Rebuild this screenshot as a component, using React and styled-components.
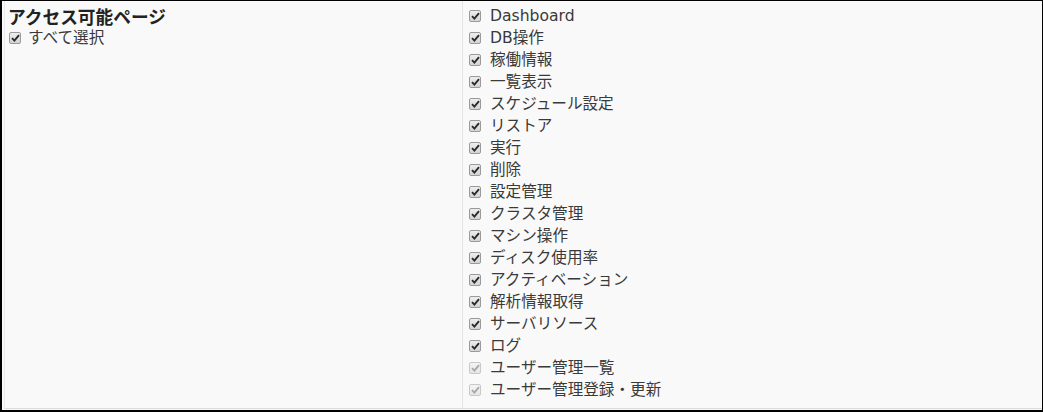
import React from 'react';
import styled, { createGlobalStyle } from 'styled-components';

const GlobalStyle = createGlobalStyle`
  html, body {
    margin: 0;
    padding: 0;
    background: #fff;
  }
  body {
    font-family: "DejaVu Sans", "Noto Sans CJK JP", sans-serif;
    color: #333;
  }
`;

const Frame = styled.div`
  box-sizing: border-box;
  width: 1043px;
  height: 412px;
  border: 1px solid #000;
  border-left-width: 2px;
  border-bottom-width: 2px;
  background: #f9f9f9;
  padding-left: 2px;
  overflow: hidden;
`;

const Table = styled.div`
  display: grid;
  grid-template-columns: 457px 1fr;
  height: 407px;
  border-left: 1px solid #e9e9e9;
  border-bottom: 1px solid #dcdcdc;
`;

const Cell = styled.div`
  padding: ${(p) => (p.$right ? '4px 0 0 5px' : '4px 0 0 3px')};
  border-left: ${(p) => (p.$right ? '1px solid #e4e4e4' : 'none')};
`;

const Heading = styled.div`
  font-family: "Noto Sans CJK JP", sans-serif;
  font-size: 17.7px;
  font-weight: bold;
  line-height: 22px;
  color: #222;
`;

const Row = styled.label`
  display: flex;
  align-items: center;
  gap: ${(p) => (p.$wide ? '9px' : '7px')};
  height: 22px;
  font-size: 15.6px;
  color: #3a3a3a;
  white-space: nowrap;
`;

const Box = styled.span`
  box-sizing: border-box;
  flex: none;
  width: 12px;
  height: 12px;
  margin-left: 1px;
  border: 1px solid ${(p) => (p.$disabled ? '#c8c8c8' : '#9a9a9a')};
  border-radius: 2px;
  background: ${(p) =>
    p.$disabled
      ? 'linear-gradient(#f4f4f4, #e6e6e6)'
      : 'linear-gradient(#eeeeee, #d4d4d4)'};
  display: flex;
  align-items: center;
  justify-content: center;

  svg {
    display: block;
  }
`;

const Label = styled.span`
  line-height: 22px;
`;

const Check = ({ disabled }) => (
  <Box $disabled={disabled}>
    <svg width="9" height="8" viewBox="0 0 9 8">
      <path
        d="M1 4.2 L3.4 6.6 L8 1.2"
        fill="none"
        stroke={disabled ? '#a8a8a8' : '#2a2a2a'}
        strokeWidth="1.9"
      />
    </svg>
  </Box>
);

const pages = [
  'Dashboard',
  'DB操作',
  '稼働情報',
  '一覧表示',
  'スケジュール設定',
  'リストア',
  '実行',
  '削除',
  '設定管理',
  'クラスタ管理',
  'マシン操作',
  'ディスク使用率',
  'アクティベーション',
  '解析情報取得',
  'サーバリソース',
  'ログ',
];

const disabledPages = ['ユーザー管理一覧', 'ユーザー管理登録・更新'];

export default function App() {
  return (
    <>
      <GlobalStyle />
      <Frame>
        <Table>
          <Cell>
            <Heading>アクセス可能ページ</Heading>
            <Row>
              <Check />
              <Label>すべて選択</Label>
            </Row>
          </Cell>
          <Cell $right>
            {pages.map((p) => (
              <Row key={p} $wide>
                <Check />
                <Label>{p}</Label>
              </Row>
            ))}
            {disabledPages.map((p) => (
              <Row key={p} $wide>
                <Check disabled />
                <Label>{p}</Label>
              </Row>
            ))}
          </Cell>
        </Table>
      </Frame>
    </>
  );
}
